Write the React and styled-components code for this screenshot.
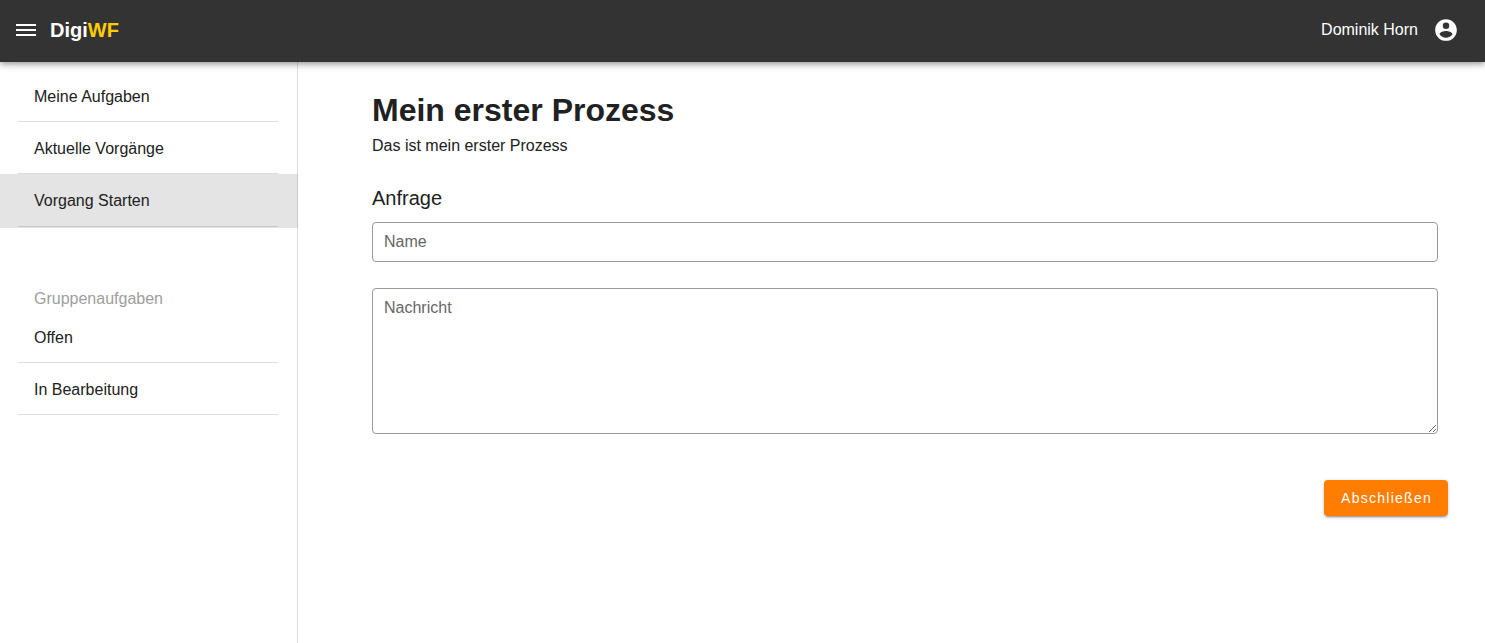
import React from "react";
import styled, { createGlobalStyle } from "styled-components";

const GlobalStyle = createGlobalStyle`
  *, *::before, *::after { box-sizing: border-box; }
  body {
    margin: 0;
    background: #fff;
    color: #212121;
    font: 16px/24px "Liberation Sans", Arial, sans-serif;
  }
  h1, h2, p, ul { margin: 0; padding: 0; }
`;

const Page = styled.div`
  display: flex;
  flex-direction: column;
  min-height: 100vh;
`;

const AppBar = styled.header`
  position: relative;
  z-index: 1;
  display: flex;
  align-items: center;
  justify-content: space-between;
  height: 62px;
  padding: 0 26px 2px 13px;
  background: #333;
  color: #fff;
  box-shadow: 0 2px 4px -1px rgba(0, 0, 0, 0.2), 0 4px 5px rgba(0, 0, 0, 0.14),
    0 1px 10px rgba(0, 0, 0, 0.12);
`;

const BarGroup = styled.div`
  display: flex;
  align-items: center;
  gap: ${({ $gap }) => $gap}px;
`;

const IconButton = styled.button`
  display: flex;
  padding: 0;
  border: 0;
  background: none;
  color: inherit;
  cursor: pointer;
`;

const Brand = styled.a`
  color: inherit;
  font-size: 20px;
  font-weight: 700;
  text-decoration: none;
`;

const BrandAccent = styled.span`
  color: #ffcc00;
`;

const UserName = styled.span`
  line-height: 24px;
`;

const Body = styled.div`
  display: flex;
  flex: 1;
`;

const Sidebar = styled.nav`
  flex: 0 0 298px;
  padding-top: 8px;
  border-right: 1px solid #dedede;
`;

const NavList = styled.ul`
  list-style: none;
`;

const NavItem = styled.li`
  padding: 0 19px ${({ $active }) => ($active ? 1 : 0)}px 18px;
  margin-right: ${({ $active }) => ($active ? -1 : 0)}px;
  background: ${({ $active }) => ($active ? "#e4e4e4" : "transparent")};
  border-right: ${({ $active }) => ($active ? "1px solid #c8c8c8" : "0")};
`;

const NavLink = styled.a`
  display: block;
  padding: 15px 16px ${({ $active }) => ($active ? 13 : 12)}px;
  border-bottom: 1px solid ${({ $active }) => ($active ? "#c5c5c5" : "#dcdcdc")};
  color: #212121;
  text-decoration: none;
`;

const GroupTitle = styled.h2`
  padding: 59px 34px 0;
  color: #9e9e9e;
  font-size: 16px;
  font-weight: 400;
`;

const Main = styled.main`
  flex: 1;
  min-width: 0;
  padding: 28px 37px 28px 74px;
`;

const Title = styled.h1`
  font-size: 32px;
  line-height: 40px;
`;

const Description = styled.p`
  padding-top: 4px;
`;

const Form = styled.form`
  display: flex;
  flex-direction: column;
  padding-top: 26px;
`;

const SectionTitle = styled.h2`
  padding-bottom: 10px;
  font-size: 20px;
  font-weight: 400;
  line-height: 28px;
`;

const Fields = styled.div`
  display: flex;
  flex-direction: column;
  gap: 26px;
  padding-right: 10px;
  padding-bottom: 46px;
`;

const Input = styled.input`
  display: block;
  width: 100%;
  height: 40px;
  padding: 0 11px;
  border: 1px solid #9a9a9a;
  border-radius: 4px;
  background: #fff;
  color: inherit;
  font: inherit;
  &::placeholder { color: #666; opacity: 1; }
`;

const TextArea = styled(Input).attrs({ as: "textarea" })`
  height: 146px;
  padding: 7px 11px;
  resize: vertical;
`;

const SubmitButton = styled.button`
  align-self: flex-end;
  height: 36px;
  padding: 0 16px 0 17px;
  border: 0;
  border-radius: 4px;
  background: #ff7d00;
  color: #fff;
  font: 14px/20px "Liberation Sans", Arial, sans-serif;
  letter-spacing: 0.09em;
  cursor: pointer;
  box-shadow: 0 3px 1px -2px rgba(0, 0, 0, 0.2), 0 2px 2px rgba(0, 0, 0, 0.14),
    0 1px 5px rgba(0, 0, 0, 0.12);
`;

const MenuIcon = () => (
  <svg width="26" height="26" viewBox="0 0 26 26" fill="currentColor" aria-hidden="true">
    <path d="M3 7h20v2H3zM3 12h20v2H3zM3 17h20v2H3z" />
  </svg>
);

const AccountIcon = () => (
  <svg width="26" height="26" viewBox="0 0 24 24" fill="currentColor" aria-hidden="true">
    <path d="M12 19.2c-2.5 0-4.71-1.28-6-3.2.03-2 4-3.1 6-3.1s5.97 1.1 6 3.1a7.23 7.23 0 0 1-6 3.2M12 5a3 3 0 0 1 3 3 3 3 0 0 1-3 3 3 3 0 0 1-3-3 3 3 0 0 1 3-3m0-3A10 10 0 0 0 2 12a10 10 0 0 0 10 10 10 10 0 0 0 10-10c0-5.53-4.5-10-10-10" />
  </svg>
);

const processLinks = [
  { label: "Meine Aufgaben" },
  { label: "Aktuelle Vorgänge" },
  { label: "Vorgang Starten", active: true },
];

const groupLinks = [{ label: "Offen" }, { label: "In Bearbeitung" }];

function Navigation({ items }) {
  return (
    <NavList>
      {items.map(({ label, active }) => (
        <NavItem key={label} $active={active}>
          <NavLink href="#" $active={active} aria-current={active ? "page" : undefined}>
            {label}
          </NavLink>
        </NavItem>
      ))}
    </NavList>
  );
}

export default function App() {
  return (
    <>
      <GlobalStyle />
      <Page>
        <AppBar>
          <BarGroup $gap={11}>
            <IconButton type="button" aria-label="Menü">
              <MenuIcon />
            </IconButton>
            <Brand href="#">
              Digi<BrandAccent>WF</BrandAccent>
            </Brand>
          </BarGroup>
          <BarGroup $gap={15}>
            <UserName>Dominik Horn</UserName>
            <IconButton type="button" aria-label="Benutzerkonto">
              <AccountIcon />
            </IconButton>
          </BarGroup>
        </AppBar>
        <Body>
          <Sidebar>
            <Navigation items={processLinks} />
            <GroupTitle>Gruppenaufgaben</GroupTitle>
            <Navigation items={groupLinks} />
          </Sidebar>
          <Main>
            <Title>Mein erster Prozess</Title>
            <Description>Das ist mein erster Prozess</Description>
            <Form onSubmit={(event) => event.preventDefault()}>
              <SectionTitle>Anfrage</SectionTitle>
              <Fields>
                <Input type="text" name="name" aria-label="Name" placeholder="Name" />
                <TextArea name="message" aria-label="Nachricht" placeholder="Nachricht" />
              </Fields>
              <SubmitButton type="submit">Abschließen</SubmitButton>
            </Form>
          </Main>
        </Body>
      </Page>
    </>
  );
}
